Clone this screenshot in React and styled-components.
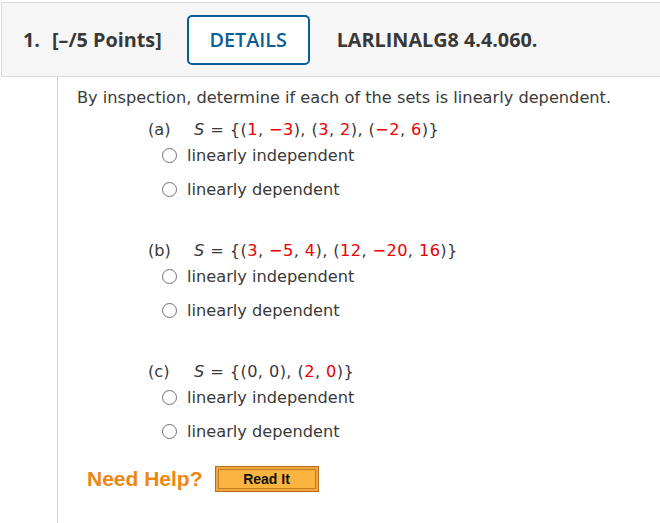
import React from 'react';
import styled, { createGlobalStyle } from 'styled-components';

const GlobalStyle = createGlobalStyle`
  html, body {
    margin: 0;
    padding: 0;
    background: #fff;
    overflow: hidden;
  }
  #root {
    width: 660px;
    height: 523px;
  }
`;

const Page = styled.div`
  padding-top: 2px;
  padding-left: 1px;
  height: 521px;
  display: flex;
  flex-direction: column;
`;

const Header = styled.div`
  height: 73px;
  background: #f6f6f6;
  border: 1px solid #dcdcdc;
  border-right: none;
  display: flex;
  align-items: center;
  padding-left: 21px;
  font-family: "Open Sans", sans-serif;
  font-weight: 700;
  font-size: 19.8px;
  color: #383838;
`;

const Number = styled.span`
  margin-right: 12px;
`;

const Points = styled.span`
  margin-right: 25px;
`;

const DetailsButton = styled.button`
  box-sizing: border-box;
  width: 123px;
  height: 50px;
  border: 2px solid #0a5e97;
  border-radius: 5px;
  background: #fff;
  color: #0a5e97;
  font-family: "Open Sans", sans-serif;
  font-weight: 600;
  font-size: 19.8px;
  margin-right: 27px;
  padding: 0;
`;

const Code = styled.span``;

const Body = styled.div`
  flex: 1;
  margin-left: 56px;
  border-left: 1px solid #d0d0d0;
  padding: 10px 0 0 19px;
  font-family: "DejaVu Sans", Verdana, sans-serif;
  font-size: 16.2px;
  color: #3a3a3a;
`;

const Prompt = styled.div`
  line-height: 22px;
  margin-bottom: 10px;
`;

const Part = styled.div`
  margin-left: 71px;
  margin-bottom: 40px;
`;

const SetLine = styled.div`
  display: flex;
  line-height: 22px;
  margin-bottom: 3px;
`;

const Label = styled.span`
  width: 46px;
`;

const SetText = styled.span`
  letter-spacing: 0.4px;
`;

const Red = styled.span`
  color: #ee0000;
`;

const Italic = styled.i``;

const Choice = styled.label`
  display: flex;
  align-items: center;
  height: 22px;
  margin-left: 14px;
  margin-bottom: 12px;
`;

const Radio = styled.span`
  box-sizing: border-box;
  width: 15px;
  height: 15px;
  border: 1.5px solid #6f6f6f;
  border-radius: 50%;
  margin-right: 10px;
`;

const HelpRow = styled.div`
  display: flex;
  align-items: center;
  margin-left: 10px;
  margin-top: -16px;
`;

const NeedHelp = styled.span`
  font-family: "Liberation Sans", Arial, sans-serif;
  font-weight: 700;
  font-size: 21px;
  color: #ee8712;
  margin-right: 12px;
`;

const ReadIt = styled.button`
  box-sizing: border-box;
  width: 104px;
  height: 26px;
  background: #fbb43f;
  border: 1px solid #b66e1f;
  box-shadow: inset 0 0 0 2px #f6a43a, inset 0 0 0 3px #c07a28;
  font-family: "Liberation Sans", Arial, sans-serif;
  font-weight: 700;
  font-size: 14px;
  color: #111;
  padding: 0;
`;

const parts = [
  {
    label: '(a)',
    set: (
      <>
        <Italic>S</Italic> = {'{'}(<Red>1</Red>, <Red>−3</Red>), (<Red>3</Red>, <Red>2</Red>), (<Red>−2</Red>, <Red>6</Red>){'}'}
      </>
    ),
  },
  {
    label: '(b)',
    set: (
      <>
        <Italic>S</Italic> = {'{'}(<Red>3</Red>, <Red>−5</Red>, <Red>4</Red>), (<Red>12</Red>, <Red>−20</Red>, <Red>16</Red>){'}'}
      </>
    ),
  },
  {
    label: '(c)',
    set: (
      <>
        <Italic>S</Italic> = {'{'}(0, 0), (<Red>2</Red>, <Red>0</Red>){'}'}
      </>
    ),
  },
];

export default function App() {
  return (
    <>
      <GlobalStyle />
      <Page>
        <Header>
          <Number>1.</Number>
          <Points>[–/5 Points]</Points>
          <DetailsButton>DETAILS</DetailsButton>
          <Code>LARLINALG8 4.4.060.</Code>
        </Header>
        <Body>
          <Prompt>By inspection, determine if each of the sets is linearly dependent.</Prompt>
          {parts.map((p) => (
            <Part key={p.label}>
              <SetLine>
                <Label>{p.label}</Label>
                <SetText>{p.set}</SetText>
              </SetLine>
              <Choice><Radio />linearly independent</Choice>
              <Choice><Radio />linearly dependent</Choice>
            </Part>
          ))}
          <HelpRow>
            <NeedHelp>Need Help?</NeedHelp>
            <ReadIt>Read It</ReadIt>
          </HelpRow>
        </Body>
      </Page>
    </>
  );
}
